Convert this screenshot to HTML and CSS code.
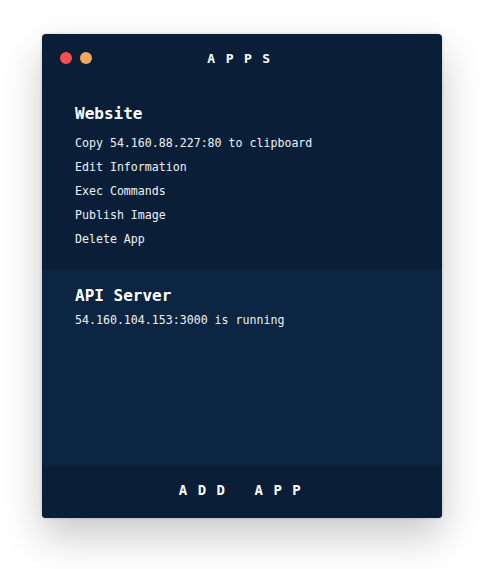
FILE: index.html
```html
<!DOCTYPE html>
<html>
<head>
<meta charset="utf-8">
<link rel="stylesheet" href="styles.css">
</head>
<body>
<div class="window">
  <div class="titlebar">
    <div class="dots"><span class="dot red"></span><span class="dot orange"></span></div>
    <div class="title">APPS</div>
  </div>
  <div class="app app-first">
    <div class="app-name">Website</div>
    <ul class="menu">
      <li>Copy 54.160.88.227:80 to clipboard</li>
      <li>Edit Information</li>
      <li>Exec Commands</li>
      <li>Publish Image</li>
      <li>Delete App</li>
    </ul>
  </div>
  <div class="app app-second">
    <div class="app-name">API Server</div>
    <div class="status">54.160.104.153:3000 is running</div>
  </div>
  <div class="footer">ADD APP</div>
</div>
</body>
</html>
```
FILE: styles.css
```css
html, body {
  margin: 0;
  padding: 0;
  background: #ffffff;
}
body {
  font-family: "DejaVu Sans Mono", "Liberation Mono", monospace;
  color: #ffffff;
  height: 569px;
  overflow: hidden;
}
.window {
  margin: 34px 0 0 42px;
  width: 400px;
  height: 484px;
  background: #0a1f37;
  border-radius: 4px;
  box-shadow: 0 18px 40px rgba(0,0,0,0.22), 0 0 3px rgba(0,0,0,0.18);
  display: flex;
  flex-direction: column;
  overflow: hidden;
}
.titlebar {
  position: relative;
  height: 48px;
  display: flex;
  align-items: center;
  justify-content: center;
}
.dots {
  position: absolute;
  left: 18px;
  top: 18px;
  display: flex;
  gap: 8px;
}
.dot {
  width: 12px;
  height: 12px;
  border-radius: 50%;
  display: block;
}
.red { background: #fc4d4f; }
.orange { background: #f4a95b; }
.title {
  font-size: 13px;
  font-weight: bold;
  letter-spacing: 10.5px;
  padding-left: 4px;
}
.app {
  padding: 0 33px;
}
.app-first {
  padding-top: 22px;
  padding-bottom: 19px;
}
.app-second {
  background: #0c2542;
  flex: 1;
  padding-top: 16px;
}
.app-name {
  font-size: 16px;
  font-weight: bold;
  line-height: 20px;
}
.menu {
  list-style: none;
  margin: 7px 0 0;
  padding: 0;
}
.menu li, .status {
  font-size: 11.6px;
  line-height: 24px;
  color: #eef2f7;
}
.status {
  margin-top: 2px;
}
.footer {
  height: 53px;
  box-sizing: border-box;
  padding-bottom: 3px;
  display: flex;
  align-items: center;
  justify-content: center;
  font-size: 14px;
  font-weight: bold;
  letter-spacing: 10.5px;
  padding-left: 6px;
  background: #0a1f37;
}
```
